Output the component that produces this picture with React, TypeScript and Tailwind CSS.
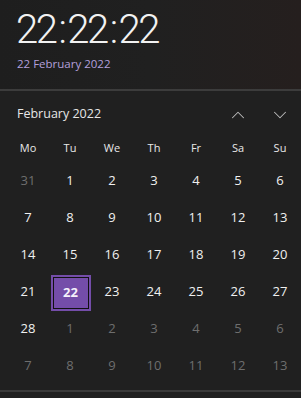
import { ChevronDown, ChevronUp } from "lucide-react";

const days = ["Mo", "Tu", "We", "Th", "Fr", "Sa", "Su"];

const cells: { n: number; cur: boolean }[] = [
  { n: 31, cur: false },
  ...Array.from({ length: 28 }, (_, i) => ({ n: i + 1, cur: true })),
  ...Array.from({ length: 13 }, (_, i) => ({ n: i + 1, cur: false })),
];

const App = () => {
  return (
    <div
      className="h-[398px] w-[301px] overflow-hidden bg-[#202020] text-white"
      style={{ fontFamily: "'Open Sans', 'Noto Sans', sans-serif" }}
    >
      <div className="h-[89px] bg-gradient-to-r from-[#1e1e1e] via-[#202020] to-[#251f1e] pl-[16px] pt-[6px]">
        <div
          className="text-[40px] leading-[48px] font-light tracking-[-2.5px] text-[#f2f2f2]"
          style={{ fontFamily: "Roboto, sans-serif" }}
        >
          22<span className="mx-[3px]">:</span>22<span className="mx-[3px]">:</span>22
        </div>
        <div className="mt-[2px] pl-[1px] text-[11.5px] leading-[16px] text-[#b4a0dc]">22 February 2022</div>
      </div>
      <div className="h-[2px] bg-[#3c3c3c]" />
      <div className="grid h-[46px] grid-cols-7 items-center pl-[7px] pt-[1px]">
        <span className="col-span-5 pl-[10px] text-[12.5px] text-[#e6e6e6]">February 2022</span>
        <div className="flex justify-center text-[#bdbdbd]">
          <ChevronUp size={22} strokeWidth={1.1} />
        </div>
        <div className="flex justify-center text-[#bdbdbd]">
          <ChevronDown size={22} strokeWidth={1.1} />
        </div>
      </div>
      <div className="grid grid-cols-7 pl-[7px]">
        {days.map((d) => (
          <div key={d} className="flex h-[23px] items-center justify-center text-[11px] text-[#e8e8e8]">
            {d}
          </div>
        ))}
      </div>
      <div className="grid grid-cols-7 pl-[7px] pt-[2px]">
        {cells.map((c, i) => {
          const sel = c.cur && c.n === 22;
          return (
            <div key={i} className="flex h-[37px] items-center justify-center">
              {sel ? (
                <div className="ml-[1px] mt-[2px] flex h-[36px] w-[40px] items-center justify-center border-2 border-[#744da9] bg-[#744da9]">
                  <div className="flex h-full w-full items-center justify-center border border-[#111] text-[13px] font-bold text-[#f4f0fb]">
                    {c.n}
                  </div>
                </div>
              ) : (
                <span className={c.cur ? "text-[13px] text-[#f0f0f0]" : "text-[13px] text-[#6e6e6e]"}>{c.n}</span>
              )}
            </div>
          );
        })}
      </div>
      <div className="mt-[6px] h-[2px] bg-[#3a3a3a]" />
    </div>
  );
};

export default App;
